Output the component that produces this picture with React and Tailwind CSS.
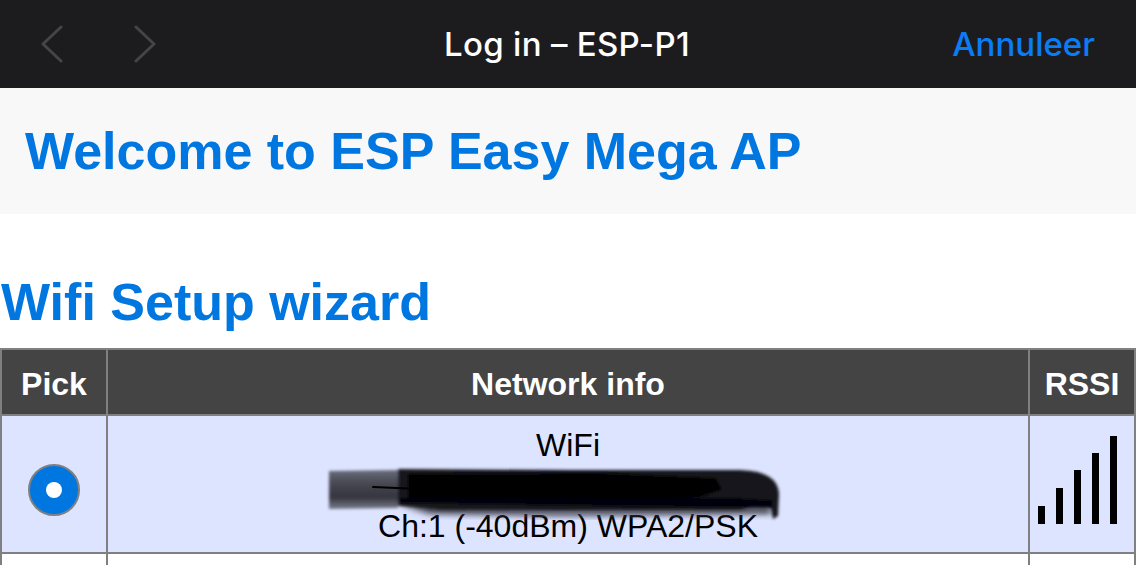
import React from "react";

const bars = [18, 36, 54, 71, 88];

function Chevron({ d }) {
  return (
    <svg width="22" height="38" viewBox="0 0 22 38" fill="none" stroke="#454547" strokeWidth="3" strokeLinecap="round" strokeLinejoin="round">
      <path d={d} />
    </svg>
  );
}

function Scribble() {
  return (
    <svg className="absolute left-[216px] top-[46px]" width="464" height="68" viewBox="324 462 464 68" fill="none">
      <defs>
        <filter id="soft" x="-5%" y="-20%" width="110%" height="140%">
          <feGaussianBlur stdDeviation="1.8" />
        </filter>
        <filter id="softer" x="-5%" y="-30%" width="110%" height="160%">
          <feGaussianBlur stdDeviation="3" />
        </filter>
        <linearGradient id="smear" x1="0" y1="0" x2="0" y2="1">
          <stop offset="0" stopColor="#6a6c7a" />
          <stop offset="0.3" stopColor="#4a4b56" />
          <stop offset="0.7" stopColor="#33343c" />
          <stop offset="1" stopColor="#7a7c8c" />
        </linearGradient>
      </defs>
      <path d="M400 505 L560 510 L770 506 L772 514 L560 516 L430 514 Z" fill="#3c3d48" filter="url(#softer)" />
      <g filter="url(#soft)">
        <path d="M329 471 L398 470 L398 508 L329 509 Z" fill="url(#smear)" />
        <path d="M398 469 L570 470 L740 470 Q778 471 779 494 L778 516 L773 519 L770 504 L740 510 L560 511 L440 510 L398 506 Z" fill="#17171c" />
        <path d="M408 474 L600 473 L716 478 L722 490 L700 497 L600 500 L408 498 Z" fill="#000" />
        <path d="M400 498 L740 498 L772 500 L773 508 L600 506 L400 503 Z" fill="#050507" />
      </g>
      <path d="M373 487 L420 489" stroke="#000" strokeWidth="2" strokeLinecap="round" />
    </svg>
  );
}

export default function App() {
  return (
    <div className="h-[565px] overflow-hidden bg-white font-['Liberation_Sans',sans-serif]">
      <nav className="flex h-[88px] items-center bg-[#1c1c1e] pl-[41px] pr-[41px]">
        <div className="flex w-[403px] items-center gap-[71px]">
          <Chevron d="M20 2 L2 19 L20 36" />
          <Chevron d="M2 2 L20 19 L2 36" />
        </div>
        <div className="pt-px font-['Inter',sans-serif] text-[33px] font-medium tracking-[0.3px] text-white">Log in – ESP-P1</div>
        <div className="ml-auto pt-px font-['Inter',sans-serif] text-[33px] font-medium text-[#0a7cf5]">Annuleer</div>
      </nav>

      <header className="flex h-[126px] items-center bg-[#f8f8f8] pl-[25px]">
        <h1 className="text-[52px] font-bold text-[#0077e0]">Welcome to ESP Easy Mega AP</h1>
      </header>

      <h2 className="flex h-[134px] items-end pb-[20px] pl-px text-[52px] leading-none font-bold text-[#0077e0]">Wifi Setup wizard</h2>

      <div className="grid grid-cols-[104px_1fr_104px] grid-rows-[64px_136px_40px] gap-[2px] bg-[#808080] p-[2px] text-[32px]">
        <div className="flex items-center justify-center bg-[#444444] pt-[3px] font-bold text-white">Pick</div>
        <div className="flex items-center justify-center bg-[#444444] pt-[3px] font-bold text-white">Network info</div>
        <div className="flex items-center justify-center bg-[#444444] pt-[3px] font-bold text-white">RSSI</div>

        <div className="flex items-center justify-center bg-[#dde4ff] pt-[12px]">
          <div className="flex h-[52px] w-[52px] items-center justify-center rounded-full border-2 border-[#808080] bg-[#0077e0]">
            <div className="h-4 w-4 rounded-full bg-white" />
          </div>
        </div>
        <div className="relative flex flex-col items-center justify-between bg-[#dde4ff] pt-[11px] pb-[8px] leading-[36px] text-black">
          <span>WiFi</span>
          <Scribble />
          <span>Ch:1 (-40dBm) WPA2/PSK</span>
        </div>
        <div className="flex items-start justify-center bg-[#dde4ff] pt-[20px] pr-[9px]">
          <div className="flex h-[88px] items-end gap-[11px]">
            {bars.map((h) => (
              <div key={h} className="w-[7px] bg-black" style={{ height: h }} />
            ))}
          </div>
        </div>

        <div className="bg-white" />
        <div className="bg-white" />
        <div className="bg-white" />
      </div>
    </div>
  );
}
